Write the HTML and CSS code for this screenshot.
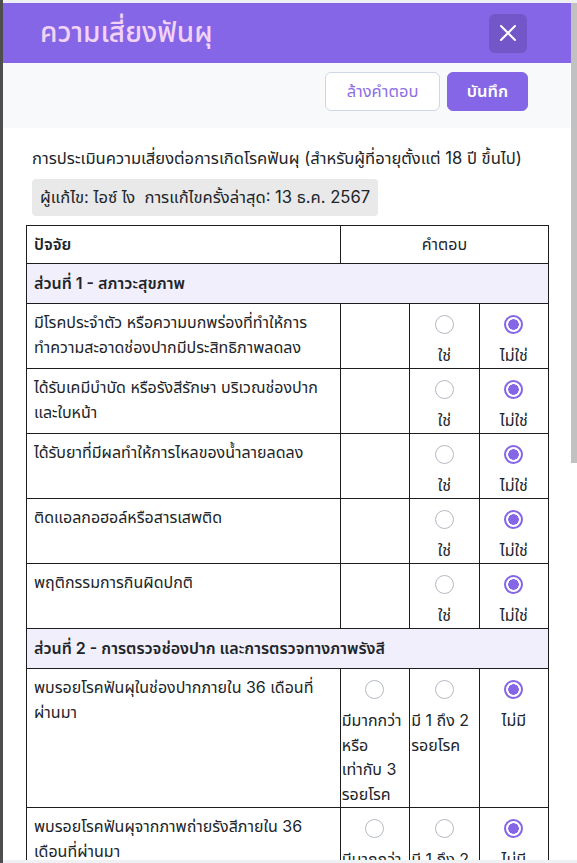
FILE: index.html
```html
<!DOCTYPE html>
<html lang="th">
<head>
    <meta charset="UTF-8">
    <meta name="viewport" content="width=device-width, initial-scale=1.0">
    <title>ความเสี่ยงฟันผุ</title>
    <link rel="stylesheet" href="styles.css">
</head>
<body>
    <div class="modal">
        <header class="modal-header">
            <h1 class="modal-title">ความเสี่ยงฟันผุ</h1>
            <button class="btn-close" type="button" aria-label="ปิด">
                <svg width="18" height="18" viewBox="0 0 18 18" fill="none">
                    <path d="M2 2L16 16M16 2L2 16" stroke="#fff" stroke-width="2" stroke-linecap="round"/>
                </svg>
            </button>
        </header>
        <div class="toolbar">
            <button class="btn btn-outline" type="button">ล้างคำตอบ</button>
            <button class="btn btn-primary" type="button">บันทึก</button>
        </div>
        <div class="modal-body">
            <p class="form-title">การประเมินความเสี่ยงต่อการเกิดโรคฟันผุ (สำหรับผู้ที่อายุตั้งแต่ 18 ปี ขึ้นไป)</p>
            <div class="edit-info">ผู้แก้ไข: ไอซ์ ไง&nbsp; การแก้ไขครั้งล่าสุด: 13 ธ.ค. 2567</div>
            <table class="risk-table">
                <colgroup>
                    <col class="col-factor">
                    <col class="col-opt">
                    <col class="col-opt">
                    <col class="col-opt">
                </colgroup>
                <thead>
                    <tr>
                        <th>ปัจจัย</th>
                        <th colspan="3" class="th-answer">คำตอบ</th>
                    </tr>
                </thead>
                <tbody>
                    <tr class="section-row"><td colspan="4">ส่วนที่ 1 - สภาวะสุขภาพ</td></tr>
                    <tr>
                        <td>มีโรคประจำตัว หรือความบกพร่องที่ทำให้การทำความสะอาดช่องปากมีประสิทธิภาพลดลง</td>
                        <td></td>
                        <td class="opt"><label><input type="radio" name="q1"><span>ใช่</span></label></td>
                        <td class="opt"><label><input type="radio" name="q1" checked><span>ไม่ใช่</span></label></td>
                    </tr>
                    <tr>
                        <td>ได้รับเคมีบำบัด หรือรังสีรักษา บริเวณช่องปากและใบหน้า</td>
                        <td></td>
                        <td class="opt"><label><input type="radio" name="q2"><span>ใช่</span></label></td>
                        <td class="opt"><label><input type="radio" name="q2" checked><span>ไม่ใช่</span></label></td>
                    </tr>
                    <tr>
                        <td>ได้รับยาที่มีผลทำให้การไหลของน้ำลายลดลง</td>
                        <td></td>
                        <td class="opt"><label><input type="radio" name="q3"><span>ใช่</span></label></td>
                        <td class="opt"><label><input type="radio" name="q3" checked><span>ไม่ใช่</span></label></td>
                    </tr>
                    <tr>
                        <td>ติดแอลกอฮอล์หรือสารเสพติด</td>
                        <td></td>
                        <td class="opt"><label><input type="radio" name="q4"><span>ใช่</span></label></td>
                        <td class="opt"><label><input type="radio" name="q4" checked><span>ไม่ใช่</span></label></td>
                    </tr>
                    <tr>
                        <td>พฤติกรรมการกินผิดปกติ</td>
                        <td></td>
                        <td class="opt"><label><input type="radio" name="q5"><span>ใช่</span></label></td>
                        <td class="opt"><label><input type="radio" name="q5" checked><span>ไม่ใช่</span></label></td>
                    </tr>
                    <tr class="section-row"><td colspan="4">ส่วนที่ 2 - การตรวจช่องปาก และการตรวจทางภาพรังสี</td></tr>
                    <tr>
                        <td>พบรอยโรคฟันผุในช่องปากภายใน 36 เดือนที่ผ่านมา</td>
                        <td class="opt"><label><input type="radio" name="q6"><span>มีมากกว่าหรือเท่ากับ 3 รอยโรค</span></label></td>
                        <td class="opt"><label><input type="radio" name="q6"><span>มี 1 ถึง 2 รอยโรค</span></label></td>
                        <td class="opt"><label><input type="radio" name="q6" checked><span>ไม่มี</span></label></td>
                    </tr>
                    <tr>
                        <td>พบรอยโรคฟันผุจากภาพถ่ายรังสีภายใน 36 เดือนที่ผ่านมา</td>
                        <td class="opt"><label><input type="radio" name="q7"><span>มีมากกว่าหรือเท่ากับ 3 รอยโรค</span></label></td>
                        <td class="opt"><label><input type="radio" name="q7"><span>มี 1 ถึง 2 รอยโรค</span></label></td>
                        <td class="opt"><label><input type="radio" name="q7" checked><span>ไม่มี</span></label></td>
                    </tr>
                    <tr>
                        <td>ได้รับการบูรณะฟันเนื่องจากฟันผุภายใน 36 เดือนที่ผ่านมา</td>
                        <td class="opt"><label><input type="radio" name="q8"><span>มีมากกว่าหรือเท่ากับ 3 ซี่</span></label></td>
                        <td class="opt"><label><input type="radio" name="q8"><span>มี 1 ถึง 2 ซี่</span></label></td>
                        <td class="opt"><label><input type="radio" name="q8" checked><span>ไม่มี</span></label></td>
                    </tr>
                    <tr>
                        <td>มีคราบจุลินทรีย์ที่มองเห็นได้ชัดเจน</td>
                        <td></td>
                        <td class="opt"><label><input type="radio" name="q9"><span>ใช่</span></label></td>
                        <td class="opt"><label><input type="radio" name="q9" checked><span>ไม่ใช่</span></label></td>
                    </tr>
                    <tr>
                        <td>มีรากฟันโผล่</td>
                        <td></td>
                        <td class="opt"><label><input type="radio" name="q10"><span>ใช่</span></label></td>
                        <td class="opt"><label><input type="radio" name="q10" checked><span>ไม่ใช่</span></label></td>
                    </tr>
                    <tr class="section-row"><td colspan="4">ส่วนที่ 3 - พฤติกรรมและการป้องกัน</td></tr>
                    <tr>
                        <td>แปรงฟันด้วยยาสีฟันผสมฟลูออไรด์วันละ 2 ครั้ง</td>
                        <td></td>
                        <td class="opt"><label><input type="radio" name="q12" checked><span>ใช่</span></label></td>
                        <td class="opt"><label><input type="radio" name="q12"><span>ไม่ใช่</span></label></td>
                    </tr>
                    <tr>
                        <td>กินอาหารหรือเครื่องดื่มที่มีน้ำตาลระหว่างมื้อมากกว่า 3 ครั้งต่อวัน</td>
                        <td></td>
                        <td class="opt"><label><input type="radio" name="q13"><span>ใช่</span></label></td>
                        <td class="opt"><label><input type="radio" name="q13" checked><span>ไม่ใช่</span></label></td>
                    </tr>
                </tbody>
            </table>
        </div>
    </div>
    <!-- thin scroll indicator beside the dialog -->
    <div class="scroll-track">
        <div class="scroll-thumb"></div>
    </div>
</body>
</html>
```

FILE: styles.css
```css
* {
    box-sizing: border-box;
}
html, body {
    height: 100%;
}
body {
    display: flex;
    margin: 0;
    padding: 3px 0;
    background: #eef0f3;
    border-left: 3px solid #4e4e4e;
    font-family: Inter, "Noto Sans Thai", "Noto Sans", sans-serif;
    font-size: 16px;
    color: #212529;
}
.modal {
    flex: 1;
    min-width: 0;
    height: 100%;
    overflow: hidden;
    background: #fff;
}
.scroll-track {
    flex: 0 0 6px;
    height: 100%;
    background: #fff;
}
.scroll-thumb {
    height: 460px;
    background: #c1c1c1;
}

/* header */
.modal-header {
    display: flex;
    align-items: center;
    justify-content: space-between;
    height: 60px;
    padding: 0 44px 0 37px;
    background: #8466e6;
}
.modal-title {
    margin: 0;
    font-size: 28px;
    font-weight: 500;
    color: #f2d3f6;
}
.btn-close {
    display: flex;
    align-items: center;
    justify-content: center;
    width: 38px;
    height: 39px;
    padding: 0;
    border: 0;
    border-radius: 6px;
    background: #7357c9;
    cursor: pointer;
}

/* action bar */
.toolbar {
    display: flex;
    justify-content: flex-end;
    gap: 7px;
    padding: 9px 43px 17px 0;
    background: #f8f9fb;
}
.btn {
    height: 39px;
    padding: 0;
    border-radius: 6px;
    font-family: inherit;
    font-size: 16.5px;
    cursor: pointer;
}
.btn-outline {
    width: 115px;
    background: #fff;
    border: 1px solid #cfd7e6;
    color: #8c6fe3;
}
.btn-primary {
    width: 81px;
    background: #8466e6;
    border: 1px solid #8466e6;
    color: #fff;
    font-weight: 600;
}

/* body */
.modal-body {
    padding: 18px 22px 24px 23px;
}
.form-title {
    margin: 0 0 8px;
    padding-left: 6px;
    font-size: 16.6px;
    line-height: 25px;
}
.edit-info {
    display: inline-block;
    margin: 0 0 9px 6px;
    padding: 6px 8px;
    font-size: 16.6px;
    line-height: 25px;
    background: #e9e9ea;
    border-radius: 4px;
}

/* table */
.risk-table {
    width: 100%;
    table-layout: fixed;
    border-collapse: collapse;
}
.col-factor {
    width: 312px;
}
.col-opt {
    width: 69px;
}
.risk-table th,
.risk-table td {
    border: 1px solid #1d1d1f;
    padding: 6px 7px;
    line-height: 25px;
    vertical-align: top;
    text-align: left;
}
.risk-table th {
    font-weight: 600;
}
.risk-table .th-answer {
    text-align: center;
    font-weight: 400;
}
.section-row td {
    padding: 7px;
    background: #f1effb;
    font-weight: 600;
}
.risk-table td.opt {
    padding: 7px 1px 0;
    text-align: center;
}
.opt label {
    display: block;
    cursor: pointer;
}
.opt span {
    display: inline-block;
    text-align: left;
    line-height: 24.6px;
}
.opt input {
    appearance: none;
    display: block;
    width: 19px;
    height: 19px;
    margin: 4px auto 9px;
    border: 1.5px solid #b3b9c3;
    border-radius: 50%;
    background: #fff;
}
.opt input:checked {
    border: 2px solid #8466e6;
    background: radial-gradient(circle, #8466e6 0 5px, #fff 5.5px);
}
```
